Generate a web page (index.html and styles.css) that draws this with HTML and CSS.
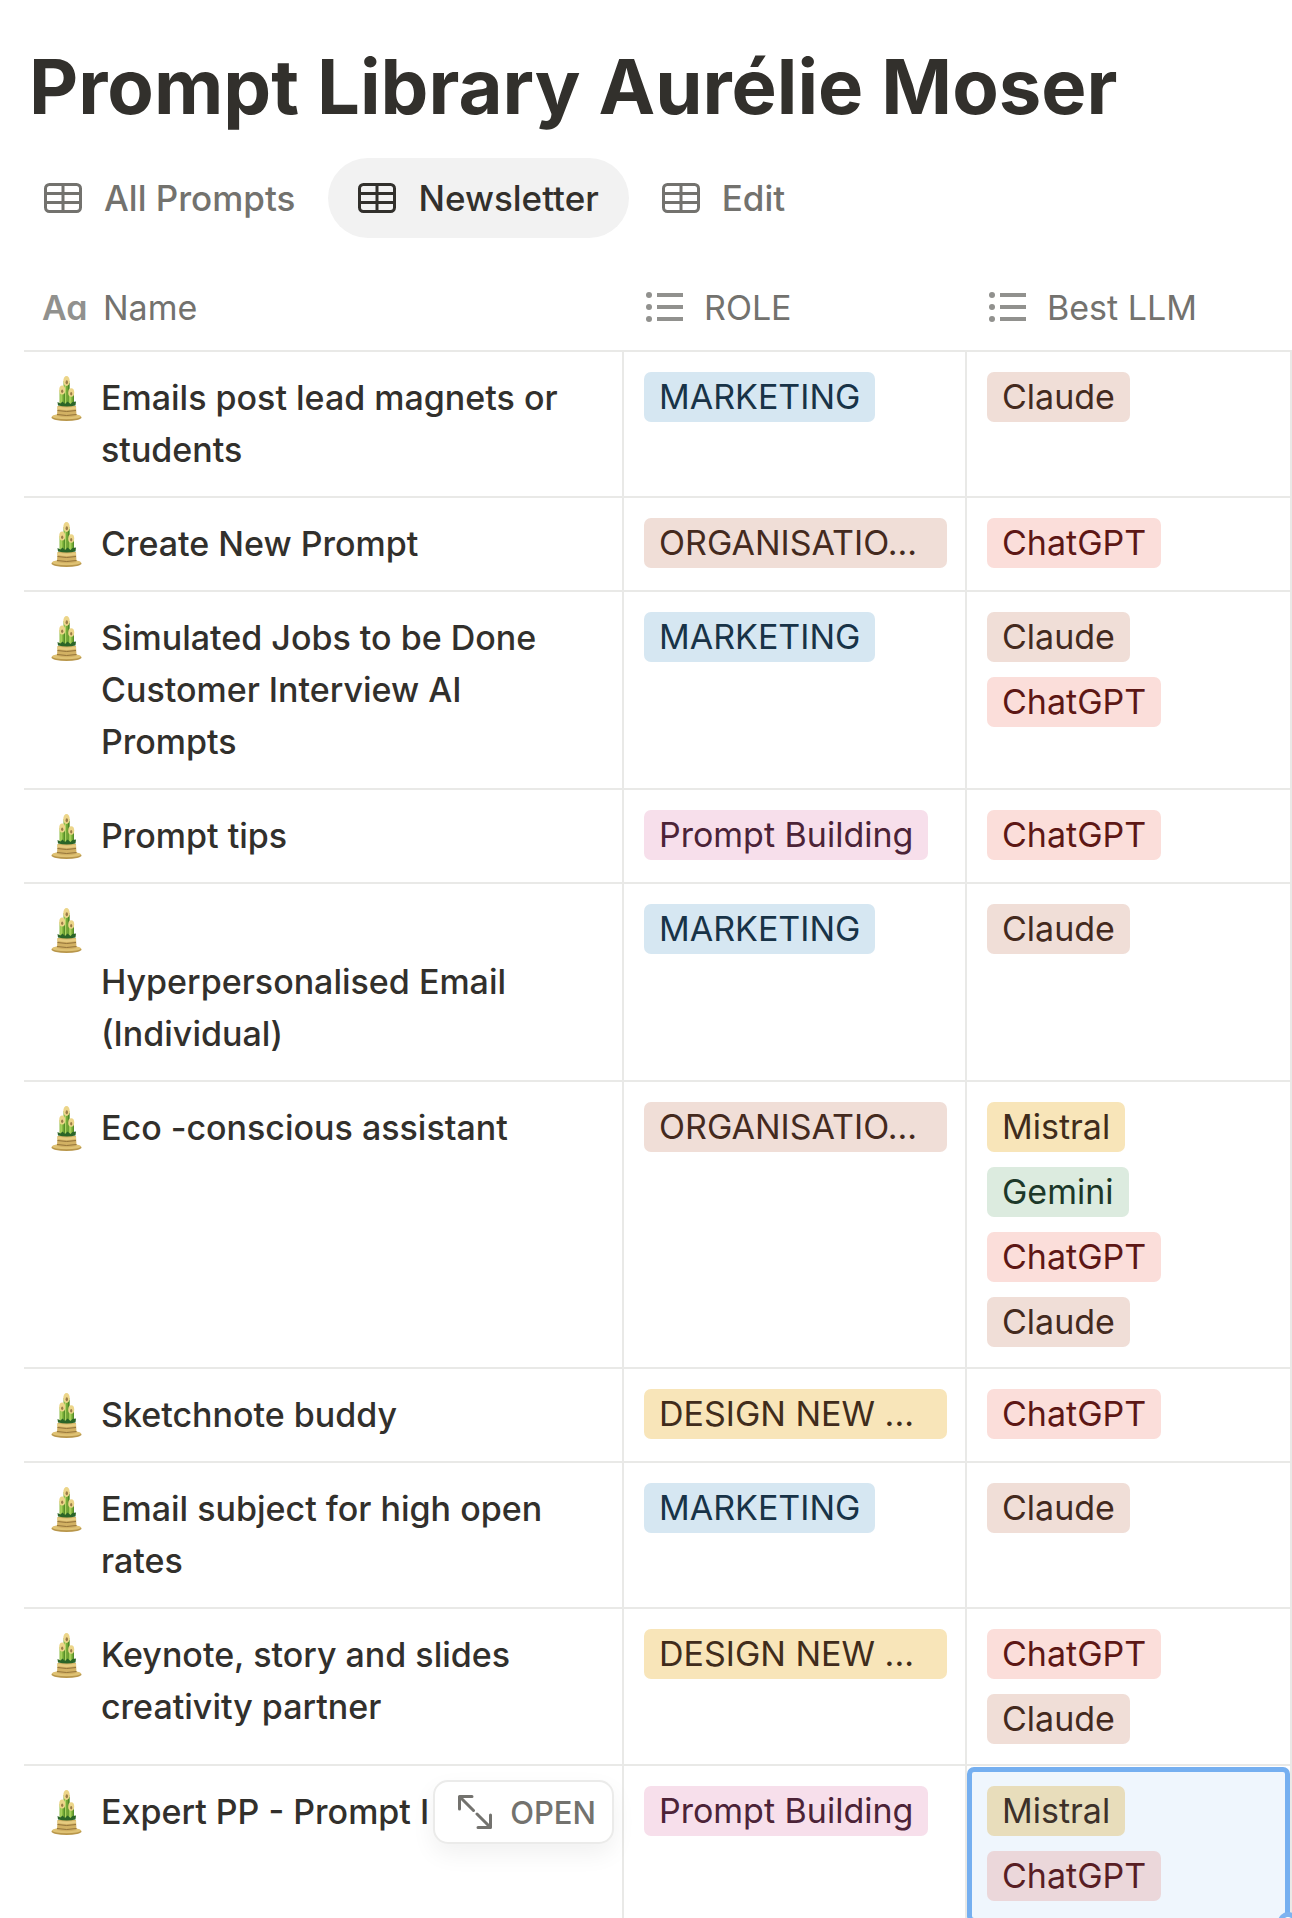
FILE: index.html
```html
<!DOCTYPE html>
<html lang="en">
<head>
  <meta charset="UTF-8">
  <meta name="viewport" content="width=device-width, initial-scale=1.0">
  <title>Prompt Library Aurélie Moser</title>
  <link rel="stylesheet" href="styles.css">
</head>
<body>
  <!-- Shared icons -->
  <svg class="sprite" aria-hidden="true">
    <symbol id="icon-table" viewBox="0 0 38 30">
      <rect x="1.5" y="1.5" width="35" height="27" rx="4" fill="none" stroke="currentColor" stroke-width="3"/>
      <path d="M2 10.5h34M2 19.5h34M19 2v26" fill="none" stroke="currentColor" stroke-width="3"/>
    </symbol>
    <symbol id="icon-list" viewBox="0 0 38 30">
      <circle cx="3" cy="3" r="3" fill="currentColor"/>
      <circle cx="3" cy="15" r="3" fill="currentColor"/>
      <circle cx="3" cy="27" r="3" fill="currentColor"/>
      <path d="M11 3h26M11 15h26M11 27h26" stroke="currentColor" stroke-width="4"/>
    </symbol>
    <symbol id="icon-bamboo" viewBox="0 0 31 45">
      <ellipse cx="15.5" cy="41.5" rx="15" ry="3.5" fill="#b8964a"/>
      <ellipse cx="15.5" cy="40.5" rx="14.500" ry="2.800" fill="#dfc274"/>
      <path d="M6.500 30h18.500l.5 10q-9.500 2.500-19.500 0z" fill="#d2b163"/>
      <path d="M6.500 30.500q9 2 18.500 0v2.500q-9 2-18.500 0z" fill="#e6cb80"/>
      <path d="M6.500 34.500q9 2 18.500 0M6 38.500q9.500 2 19.500 0" fill="none" stroke="#94743a" stroke-width="1"/>
      <path d="M12.500 5h6v25h-6z" fill="#79ab3a"/>
      <path d="M16.800 7h1.700v23h-1.700z" fill="#4c8426"/>
      <path d="M13.500 9h1.500v20h-1.500z" fill="#add463"/>
      <path d="M8.500 14h5.500v15h-5.500z" fill="#8abb41"/>
      <path d="M12.500 17h1.500v12h-1.500z" fill="#578f2b"/>
      <path d="M9.500 17h1.200v11h-1.200z" fill="#b4d96c"/>
      <path d="M17.500 17h5.500v12h-5.500z" fill="#8abb41"/>
      <path d="M21.500 18h1.500v11h-1.500z" fill="#578f2b"/>
      <path d="M18.500 19h1.200v9h-1.200z" fill="#b4d96c"/>
      <path d="M6.500 26l3 1.500 2-2 2.500 2.500 2.500-2.500 3 2.500 2-2 3.500-.5-.5 4q-8.500 2-17.500 0z" fill="#2a6428"/>
      <ellipse cx="15.500" cy="5" rx="3.200" ry="5" fill="#ecd589"/>
      <ellipse cx="15.800" cy="6.200" rx="1.200" ry="2" fill="#9a7c48"/>
      <ellipse cx="11.200" cy="14" rx="3" ry="4.500" fill="#ecd589"/>
      <ellipse cx="11.200" cy="15.200" rx="1.100" ry="1.800" fill="#9a7c48"/>
      <ellipse cx="20.200" cy="16.500" rx="3" ry="4.300" fill="#ecd589"/>
      <ellipse cx="20.200" cy="17.700" rx="1.100" ry="1.800" fill="#9a7c48"/>
    </symbol>
  </svg>

  <div class="page">
    <h1>Prompt Library Aurélie Moser</h1>

    <div class="tabs">
      <button class="tab" type="button"><svg class="tab-icon"><use href="#icon-table"/></svg>All Prompts</button>
      <button class="tab active" type="button"><svg class="tab-icon"><use href="#icon-table"/></svg>Newsletter</button>
      <button class="tab" type="button"><svg class="tab-icon"><use href="#icon-table"/></svg>Edit</button>
    </div>

    <table>
      <colgroup>
        <col class="col-name">
        <col class="col-role">
        <col class="col-llm">
      </colgroup>
      <thead>
        <tr>
          <th><div class="head"><span class="aa">Aa</span>Name</div></th>
          <th><div class="head"><svg class="list-icon"><use href="#icon-list"/></svg>ROLE</div></th>
          <th><div class="head"><svg class="list-icon"><use href="#icon-list"/></svg>Best LLM</div></th>
        </tr>
      </thead>
      <tbody>
        <tr>
          <td><div class="name"><svg class="emoji"><use href="#icon-bamboo"/></svg><span>Emails post lead magnets or students</span></div></td>
          <td><div class="tags"><span class="tag blue">MARKETING</span></div></td>
          <td><div class="tags"><span class="tag brown">Claude</span></div></td>
        </tr>
        <tr>
          <td><div class="name"><svg class="emoji"><use href="#icon-bamboo"/></svg><span>Create New Prompt</span></div></td>
          <td><div class="tags"><span class="tag brown cut">ORGANISATIO...</span></div></td>
          <td><div class="tags"><span class="tag red">ChatGPT</span></div></td>
        </tr>
        <tr>
          <td><div class="name"><svg class="emoji"><use href="#icon-bamboo"/></svg><span>Simulated Jobs to be Done Customer Interview AI Prompts</span></div></td>
          <td><div class="tags"><span class="tag blue">MARKETING</span></div></td>
          <td><div class="tags"><span class="tag brown">Claude</span><span class="tag red">ChatGPT</span></div></td>
        </tr>
        <tr>
          <td><div class="name"><svg class="emoji"><use href="#icon-bamboo"/></svg><span>Prompt tips</span></div></td>
          <td><div class="tags"><span class="tag pink">Prompt Building</span></div></td>
          <td><div class="tags"><span class="tag red">ChatGPT</span></div></td>
        </tr>
        <tr>
          <td><div class="name"><svg class="emoji"><use href="#icon-bamboo"/></svg><span><br>Hyperpersonalised Email (Individual)</span></div></td>
          <td><div class="tags"><span class="tag blue">MARKETING</span></div></td>
          <td><div class="tags"><span class="tag brown">Claude</span></div></td>
        </tr>
        <tr>
          <td><div class="name"><svg class="emoji"><use href="#icon-bamboo"/></svg><span>Eco -conscious assistant</span></div></td>
          <td><div class="tags"><span class="tag brown cut">ORGANISATIO...</span></div></td>
          <td><div class="tags"><span class="tag yellow">Mistral</span><span class="tag green">Gemini</span><span class="tag red">ChatGPT</span><span class="tag brown">Claude</span></div></td>
        </tr>
        <tr>
          <td><div class="name"><svg class="emoji"><use href="#icon-bamboo"/></svg><span>Sketchnote buddy</span></div></td>
          <td><div class="tags"><span class="tag yellow cut">DESIGN NEW ...</span></div></td>
          <td><div class="tags"><span class="tag red">ChatGPT</span></div></td>
        </tr>
        <tr>
          <td><div class="name"><svg class="emoji"><use href="#icon-bamboo"/></svg><span>Email subject for high open rates</span></div></td>
          <td><div class="tags"><span class="tag blue">MARKETING</span></div></td>
          <td><div class="tags"><span class="tag brown">Claude</span></div></td>
        </tr>
        <tr>
          <td><div class="name"><svg class="emoji"><use href="#icon-bamboo"/></svg><span>Keynote, story and slides creativity partner</span></div></td>
          <td><div class="tags"><span class="tag yellow cut">DESIGN NEW ...</span></div></td>
          <td><div class="tags"><span class="tag red">ChatGPT</span><span class="tag brown">Claude</span></div></td>
        </tr>
        <tr>
          <td class="hovered">
            <div class="name"><svg class="emoji"><use href="#icon-bamboo"/></svg><span>Expert PP - Prompt I</span></div>
            <button class="open" type="button">
              <svg class="open-icon" viewBox="0 0 34 34"><path d="M1.500 14V1.500H14M2 2l13.500 13.500M20 32.500h12.500V20M32 32L19 19" fill="none" stroke="currentColor" stroke-width="3" stroke-linecap="round" stroke-linejoin="round"/></svg>OPEN
            </button>
          </td>
          <td><div class="tags"><span class="tag pink">Prompt Building</span></div></td>
          <td class="selected"><div class="tags"><span class="tag yellow">Mistral</span><span class="tag red">ChatGPT</span></div></td>
        </tr>
      </tbody>
    </table>
  </div>
</body>
</html>
```
FILE: styles.css
```css
*,
*::before,
*::after {
  box-sizing: border-box;
}

body {
  margin: 0;
  background: #fff;
  color: #32302c;
  font-family: Inter, "Liberation Sans", sans-serif;
  font-size: 34px;
}

.sprite {
  display: none;
}

.page {
  height: 100vh;
  padding: 39px 0 0 24px;
  overflow: hidden;
}

h1 {
  margin: 0 0 25px 5px;
  font-size: 76px;
  line-height: 94px;
  font-weight: 700;
}

/* Tabs */
.tabs {
  display: flex;
  gap: 3px;
  margin: 0 0 26px -10px;
}

.tab {
  display: flex;
  align-items: center;
  gap: 22px;
  height: 80px;
  padding: 0 30px;
  border: none;
  border-radius: 40px;
  background: none;
  color: #73726e;
  font-family: inherit;
  font-size: 35px;
  font-weight: 500;
  cursor: pointer;
}

.tab.active {
  background: #f2f2f2;
  color: #32302c;
}

.tab-icon {
  width: 38px;
  height: 30px;
}

/* Table */
table {
  width: 100%;
  table-layout: fixed;
  border-collapse: separate;
  border-spacing: 0;
}

.col-name {
  width: 600px;
}

.col-role {
  width: 343px;
}

th {
  height: 88px;
  padding: 0 20px 0 22px;
  border-bottom: 2px solid #e9e9e7;
  color: #73726e;
  font-weight: 400;
  text-align: left;
}

.head {
  display: flex;
  align-items: center;
  gap: 20px;
}

.aa {
  width: 41px;
  margin-left: -4px;
  color: #91918e;
  font-weight: 600;
  font-feature-settings: "cv11";
}

.list-icon {
  width: 38px;
  height: 30px;
  color: #91918e;
}

td {
  padding: 20px 18px 20px 20px;
  border-right: 2px solid #e9e9e7;
  border-bottom: 2px solid #e9e9e7;
  vertical-align: top;
}

.name {
  display: flex;
  align-items: flex-start;
  gap: 19px;
  padding-left: 7px;
  font-weight: 500;
  line-height: 52px;
}

.emoji {
  flex: none;
  width: 31px;
  height: 45px;
  margin-top: 4px;
}

.tags {
  display: flex;
  flex-direction: column;
  align-items: flex-start;
  gap: 15px;
}

.tag {
  max-width: 100%;
  padding: 0 15px;
  border-radius: 7px;
  line-height: 50px;
  white-space: nowrap;
}

/* Label too long for its column */
.cut {
  width: 100%;
}

.blue {
  background: #d6e7f2;
  color: #183347;
}

.brown {
  background: #f0ded7;
  color: #442a1e;
}

.red {
  background: #fbdeda;
  color: #5d1715;
}

.pink {
  background: #f7dfeb;
  color: #4c2337;
}

.yellow {
  background: #f8e5b9;
  color: #402c1b;
}

.green {
  background: #dcebdf;
  color: #1c3829;
}

/* Open button floating over the hovered name */
.hovered,
.selected {
  position: relative;
}

.open {
  position: absolute;
  top: 14px;
  right: 8px;
  display: flex;
  align-items: center;
  gap: 18px;
  height: 64px;
  padding: 0 16px 0 23px;
  border: 2px solid #ebebea;
  border-radius: 15px;
  background: #fff;
  box-shadow: 0 10px 24px rgba(0, 0, 0, 0.06);
  color: #73726e;
  font-family: inherit;
  font-size: 31px;
  font-weight: 500;
  cursor: pointer;
}

.open-icon {
  width: 34px;
  height: 34px;
}

/* Selected cell */
.selected::before {
  content: "";
  position: absolute;
  top: 1px;
  right: 0;
  bottom: -2px;
  left: 0;
  border: 5px solid #75aff0;
  border-radius: 7px;
  background: rgba(35, 131, 226, 0.07);
}

.selected::after {
  content: "";
  position: absolute;
  right: -8px;
  bottom: -11px;
  width: 20px;
  height: 20px;
  border: 5px solid #7eb3f0;
  border-radius: 50%;
  background: #fff;
}
```
